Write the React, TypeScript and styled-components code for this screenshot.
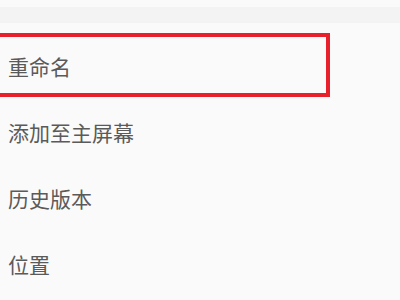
import styled, { createGlobalStyle } from 'styled-components';

const GlobalStyle = createGlobalStyle`
body {
	margin: 0;
	background-color: #fafafa;
	font-family: "Noto Sans CJK SC", "Noto Sans", sans-serif;
}
`;

const items = ['重命名', '添加至主屏幕', '历史版本', '位置'];

export default function App() {
	return (
		<Page>
			<GlobalStyle />
			<TopBand />
			<Menu>
				{items.map((label, i) => (
					<Row key={label} $selected={i === 0}>
						<Label>{label}</Label>
					</Row>
				))}
			</Menu>
		</Page>
	);
}

const Page = styled.div`
width: 400px;
height: 300px;
overflow: hidden;
padding-top: 7px;
box-sizing: border-box;
`;

const TopBand = styled.div`
height: 16px;
background-color: #f3f3f3;
`;

const Menu = styled.div`
display: flex;
flex-direction: column;
margin-top: 10px;
`;

const Row = styled.div<{ $selected: boolean }>`
height: 66px;
display: flex;
align-items: center;
box-sizing: border-box;
padding-left: 8px;
${({ $selected }) =>
	$selected &&
	`
	width: 334px;
	height: 64px;
	margin-left: -4px;
	margin-bottom: 2px;
	border: 4px solid #e8202c;
	padding-top: 2px;
	`}
`;

const Label = styled.span`
font-size: 21px;
color: #5a5a5a;
line-height: 1;
`;
